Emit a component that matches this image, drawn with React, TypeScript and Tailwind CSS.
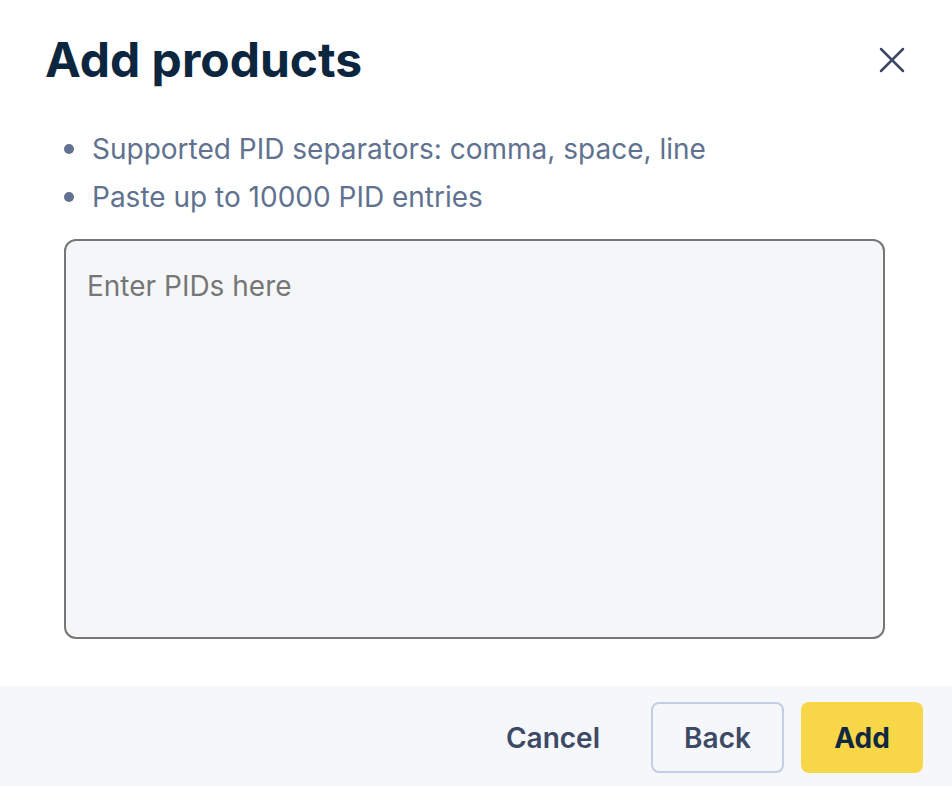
import React from "react";

export default function App() {
  return (
    <div className="w-[952px] h-[786px] bg-white flex flex-col" style={{ fontFamily: "Inter, 'Noto Sans', sans-serif" }}>
      <div className="flex-1 flex flex-col">
        <div className="flex items-center justify-between pl-[45px] pr-[47px] pt-[28px]">
          <h1 className="text-[48px] leading-[64px] font-bold text-[#0d2640]">Add products</h1>
          <button className="w-[26px] h-[26px] flex items-center justify-center text-[#3d4a66]">
            <svg width="26" height="26" viewBox="0 0 26 26" fill="none" stroke="currentColor" strokeWidth="2.5" strokeLinecap="round">
              <path d="M2 2L24 24M24 2L2 24" />
            </svg>
          </button>
        </div>
        <ul className="mt-[33px] pl-[64px] flex flex-col text-[28px] leading-[48px] text-[#60728f]">
          <li className="flex items-center gap-[18px]">
            <span className="w-[10px] h-[10px] rounded-full bg-[#60728f]" />
            <span>Supported PID separators: comma, space, line</span>
          </li>
          <li className="flex items-center gap-[18px]">
            <span className="w-[10px] h-[10px] rounded-full bg-[#60728f]" />
            <span>Paste up to 10000 PID entries</span>
          </li>
        </ul>
        <div className="pl-[64px] pr-[67px] mt-[18px]">
          <textarea
            className="w-full h-[400px] resize-none rounded-[12px] border-2 border-[#767676] bg-[#f5f6f8] px-[21px] py-[27px] text-[28px] leading-[36px] text-[#333] placeholder:text-[#767676] outline-none"
            placeholder="Enter PIDs here"
          />
        </div>
      </div>
      <div className="h-[100px] bg-[#f6f7fb] flex items-start justify-end gap-[17px] pt-[16px] pr-[29px]">
        <button className="h-[71px] px-[34px] text-[28px] font-semibold text-[#3d4a66]">Cancel</button>
        <button className="h-[71px] w-[133px] rounded-[8px] border-2 border-[#c2cfe2] text-[28px] font-semibold text-[#3d4a66]">Back</button>
        <button className="h-[71px] w-[122px] rounded-[8px] bg-[#f7d648] text-[28px] font-bold text-[#0f2740]">Add</button>
      </div>
    </div>
  );
}
